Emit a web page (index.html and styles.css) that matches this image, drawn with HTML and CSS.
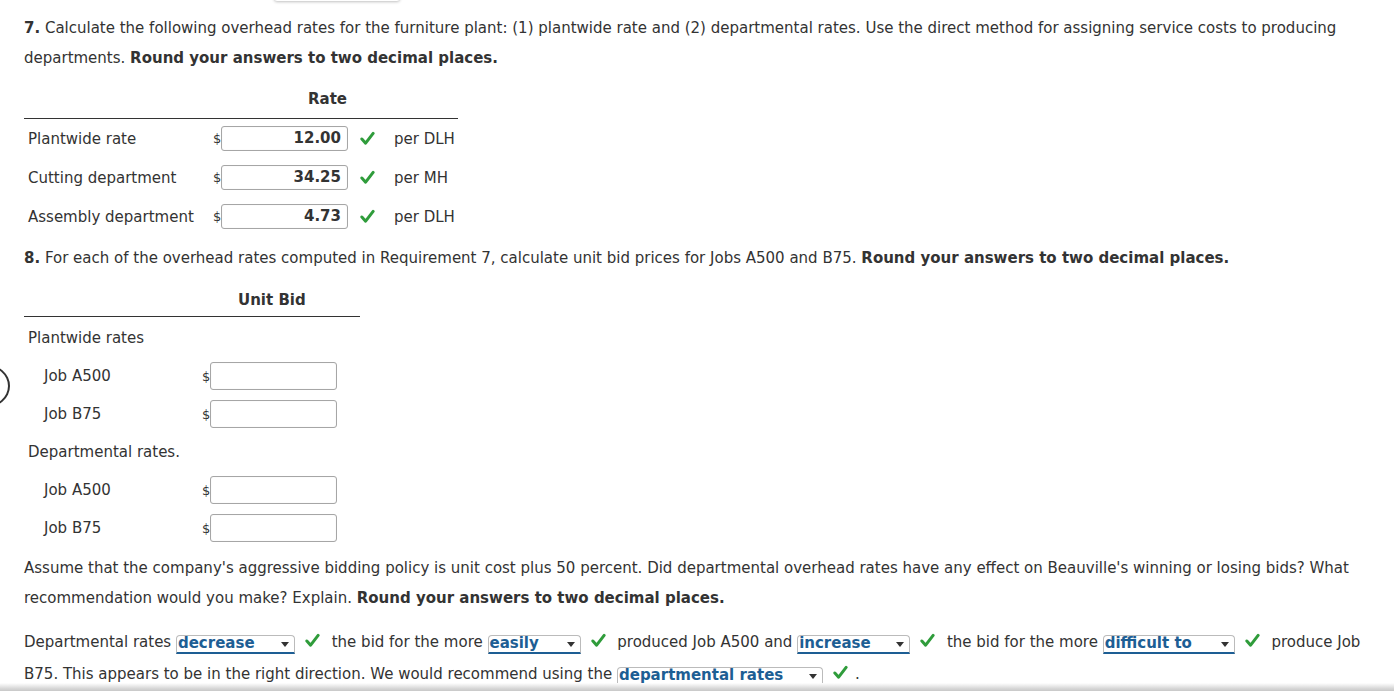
FILE: index.html
```html
<!DOCTYPE html>
<html>
<head>
<meta charset="utf-8">
<link rel="stylesheet" href="styles.css">
</head>
<body>
<div class="tab-shadow"></div>
<div class="side-circle"></div>
<main class="content">
  <p class="para"><b>7.</b> Calculate the following overhead rates for the furniture plant: (1) plantwide rate and (2) departmental rates. Use the direct method for assigning service costs to producing departments. <b>Round your answers to two decimal places.</b></p>

  <div class="table t1">
    <div class="thead"><span class="th">Rate</span></div>
    <div class="row">
      <span class="label">Plantwide rate</span>
      <span class="cur">$</span><span class="input filled">12.00</span>
      <svg class="check" viewBox="0 0 16 16"><path d="M2 8.5 L6 13 L14 2.5" /></svg>
      <span class="unit">per DLH</span>
    </div>
    <div class="row">
      <span class="label">Cutting department</span>
      <span class="cur">$</span><span class="input filled">34.25</span>
      <svg class="check" viewBox="0 0 16 16"><path d="M2 8.5 L6 13 L14 2.5" /></svg>
      <span class="unit">per MH</span>
    </div>
    <div class="row">
      <span class="label">Assembly department</span>
      <span class="cur">$</span><span class="input filled">4.73</span>
      <svg class="check" viewBox="0 0 16 16"><path d="M2 8.5 L6 13 L14 2.5" /></svg>
      <span class="unit">per DLH</span>
    </div>
  </div>

  <p class="para p8"><b>8.</b> For each of the overhead rates computed in Requirement 7, calculate unit bid prices for Jobs A500 and B75. <b>Round your answers to two decimal places.</b></p>

  <div class="table t2">
    <div class="thead"><span class="th">Unit Bid</span></div>
    <div class="row2 group"><span class="label">Plantwide rates</span></div>
    <div class="row2"><span class="label sub">Job A500</span><span class="cur">$</span><span class="input empty"></span></div>
    <div class="row2"><span class="label sub">Job B75</span><span class="cur">$</span><span class="input empty"></span></div>
    <div class="row2 group"><span class="label">Departmental rates.</span></div>
    <div class="row2"><span class="label sub">Job A500</span><span class="cur">$</span><span class="input empty"></span></div>
    <div class="row2"><span class="label sub">Job B75</span><span class="cur">$</span><span class="input empty"></span></div>
  </div>

  <p class="para p9">Assume that the company's aggressive bidding policy is unit cost plus 50 percent. Did departmental overhead rates have any effect on Beauville's winning or losing bids? What recommendation would you make? Explain. <b>Round your answers to two decimal places.</b></p>

  <p class="para final">Departmental rates <span class="sel w1">decrease</span><svg class="check" viewBox="0 0 16 16"><path d="M2 8.5 L6 13 L14 2.5" /></svg> the bid for the more <span class="sel w2">easily</span><svg class="check" viewBox="0 0 16 16"><path d="M2 8.5 L6 13 L14 2.5" /></svg> produced Job A500 and <span class="sel w3">increase</span><svg class="check" viewBox="0 0 16 16"><path d="M2 8.5 L6 13 L14 2.5" /></svg> the bid for the more <span class="sel w4">difficult to</span><svg class="check" viewBox="0 0 16 16"><path d="M2 8.5 L6 13 L14 2.5" /></svg> produce Job B75. This appears to be in the right direction. We would recommend using the <span class="sel w5">departmental rates</span><svg class="check" viewBox="0 0 16 16"><path d="M2 8.5 L6 13 L14 2.5" /></svg>.</p>
</main>
<div class="bottom-shadow"></div>
</body>
</html>
```

FILE: styles.css
```css
html, body {
  margin: 0;
  padding: 0;
  background: #fff;
}
body {
  font-family: "DejaVu Sans", Verdana, sans-serif;
  font-size: 15px;
  color: #333;
  width: 1394px;
  height: 691px;
  overflow: hidden;
  position: relative;
}
.tab-shadow {
  position: absolute;
  left: 274px;
  top: -6px;
  width: 126px;
  height: 7px;
  border-radius: 4px;
  background: #fff;
  box-shadow: 0 1px 3px rgba(0,0,0,0.25);
}
.side-circle {
  position: absolute;
  left: -40px;
  top: 364px;
  width: 46px;
  height: 40px;
  border: 2px solid #333;
  border-radius: 50%;
}
.bottom-shadow {
  position: absolute;
  left: 0;
  right: 0;
  bottom: 0;
  height: 8px;
  background: linear-gradient(#fff, #d6d6d6 70%, #c8c8c8);
}
.content {
  padding: 13px 24px 0 24px;
}
.para {
  margin: 0;
  line-height: 30px;
}
.t1 {
  width: 434px;
  margin-top: 15px;
}
.thead {
  height: 31px;
  border-bottom: 1px solid #333;
  display: flex;
  box-sizing: border-box;
}
.t2 .thead { height: 28px; }
.th {
  font-weight: bold;
  line-height: 22px;
}
.t1 .th { margin-left: 284px; }
.t2 .th { margin-left: 214px; }
.row {
  display: flex;
  align-items: center;
  height: 39px;
}
.label {
  padding-left: 4px;
  white-space: nowrap;
}
.t1 .label { width: 185px; }
.cur {
  width: 8px;
  font-size: 13px;
  overflow: hidden;
}
.input {
  box-sizing: border-box;
  border: 1px solid #a6a6a6;
  border-radius: 3px;
  box-shadow: inset 0 0 1px rgba(0,0,0,0.15);
  background: #fff;
}
.filled {
  width: 127px;
  height: 25px;
  text-align: right;
  font-weight: bold;
  line-height: 23px;
  padding-right: 6px;
}
.check {
  width: 15px;
  height: 15px;
  flex: none;
  fill: none;
  stroke: #2f9c3b;
  stroke-width: 3.2;
  stroke-linecap: round;
  stroke-linejoin: round;
}
.t1 .check { margin-left: 12px; }
.unit { margin-left: 19px; }
.p8 { margin-top: 7px; }
.t2 {
  width: 336px;
  margin-top: 16px;
}
.row2 {
  display: flex;
  align-items: center;
  height: 38px;
}
.t2 .thead + .row2 { margin-top: 2px; }
.t2 .label { width: 174px; }
.t2 .label.sub { padding-left: 20px; width: 158px; }
.empty {
  width: 127px;
  height: 28px;
}
.p9 { margin-top: 6px; }
.final {
  margin-top: 13px;
  line-height: 32px;
}
.sel {
  display: inline-block;
  position: relative;
  box-sizing: border-box;
  height: 19px;
  line-height: 15px;
  vertical-align: -1px;
  font-weight: bold;
  color: #1d5e94;
  border: 1px solid #bbb;
  border-bottom: 2px solid #1d5e94;
  border-radius: 4px 4px 0 0;
  padding-left: 1px;
  margin-right: 10px;
}
.sel::after {
  content: "";
  position: absolute;
  right: 5px;
  top: 6px;
  border-left: 4px solid transparent;
  border-right: 4px solid transparent;
  border-top: 5px solid #333;
}
.w1 { width: 119px; }
.w2 { width: 93px; }
.w3 { width: 113px; }
.w4 { width: 132px; }
.w5 { width: 206px; }
.final .check {
  vertical-align: -1px;
  margin-right: 7px;
}
```
